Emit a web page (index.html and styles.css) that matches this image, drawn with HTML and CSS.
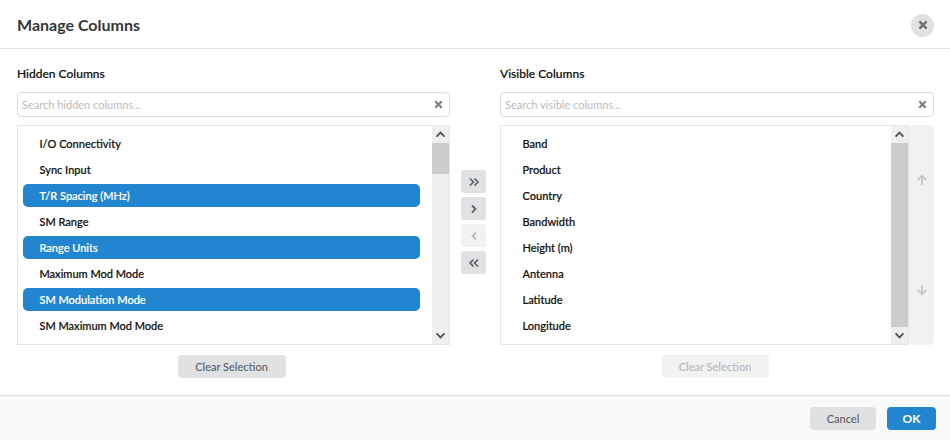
FILE: index.html
```html
<!DOCTYPE html>
<html lang="en">
<head>
    <meta charset="UTF-8">
    <meta name="viewport" content="width=device-width, initial-scale=1.0">
    <title>Manage Columns</title>
    <link rel="stylesheet" href="styles.css">
</head>
<body>
  <svg class="defs" width="0" height="0">
    <symbol id="i-x" viewBox="0 0 10 10"><path d="M2.3 .6 5 3.2 7.7 .6 9.4 2.3 6.8 5l2.6 2.7-1.7 1.7L5 6.800 2.300 9.400 .6 7.700 3.200 5 .6 2.300z"/></symbol>
    <symbol id="i-up" viewBox="0 0 12 8"><path d="M1.500 6.300 6 1.800l4.500 4.500" fill="none" stroke="currentColor" stroke-width="2"/></symbol>
    <symbol id="i-down" viewBox="0 0 12 8"><path d="M1.500 1.700 6 6.200l4.500-4.500" fill="none" stroke="currentColor" stroke-width="2"/></symbol>
    <symbol id="i-right" viewBox="0 0 10 10"><path d="M3 1.500 6.500 5 3 8.500" fill="none" stroke="currentColor" stroke-width="1.800"/></symbol>
    <symbol id="i-left" viewBox="0 0 10 10"><path d="M7 1.500 3.500 5 7 8.500" fill="none" stroke="currentColor" stroke-width="1.800"/></symbol>
    <symbol id="i-rr" viewBox="0 0 10 10"><path d="M1 1.500 4.500 5 1 8.500M5.500 1.500 9 5 5.500 8.500" fill="none" stroke="currentColor" stroke-width="1.700"/></symbol>
    <symbol id="i-ll" viewBox="0 0 10 10"><path d="M4.500 1.500 1 5l3.500 3.500M9 1.500 5.500 5 9 8.500" fill="none" stroke="currentColor" stroke-width="1.700"/></symbol>
    <symbol id="i-arrow-up" viewBox="0 0 12 12"><path d="M6 11V1.800M1.800 6 6 1.800 10.200 6" fill="none" stroke="currentColor" stroke-width="1.800"/></symbol>
    <symbol id="i-arrow-down" viewBox="0 0 12 12"><path d="M6 1v9.200M1.800 6 6 10.200 10.200 6" fill="none" stroke="currentColor" stroke-width="1.800"/></symbol>
  </svg>

  <div class="dialog">
    <div class="dialog-head">
      <h1>Manage Columns</h1>
      <button class="close-btn"><svg class="icon-x"><use href="#i-x"/></svg></button>
    </div>

    <div class="dialog-body">
      <!-- Hidden -->
      <div class="col">
        <h2>Hidden Columns</h2>
        <div class="search">
          <input placeholder="Search hidden columns...">
          <svg class="icon-x"><use href="#i-x"/></svg>
        </div>
        <div class="list-row">
          <div class="list">
            <ul class="items">
              <li>I/O Connectivity</li>
              <li>Sync Input</li>
              <li class="selected">T/R Spacing (MHz)</li>
              <li>SM Range</li>
              <li class="selected">Range Units</li>
              <li>Maximum Mod Mode</li>
              <li class="selected">SM Modulation Mode</li>
              <li>SM Maximum Mod Mode</li>
            </ul>
            <div class="scrollbar">
              <div class="scroll-btn"><svg class="icon-chev"><use href="#i-up"/></svg></div>
              <div class="track"><div class="thumb thumb-short"></div></div>
              <div class="scroll-btn"><svg class="icon-chev"><use href="#i-down"/></svg></div>
            </div>
          </div>
        </div>
        <div class="col-foot"><button class="btn btn-grey">Clear Selection</button></div>
      </div>

      <!-- Move buttons -->
      <div class="move">
        <button class="move-btn"><svg class="icon-move"><use href="#i-rr"/></svg></button>
        <button class="move-btn"><svg class="icon-move"><use href="#i-right"/></svg></button>
        <button class="move-btn off"><svg class="icon-move"><use href="#i-left"/></svg></button>
        <button class="move-btn"><svg class="icon-move"><use href="#i-ll"/></svg></button>
      </div>

      <!-- Visible -->
      <div class="col">
        <h2>Visible Columns</h2>
        <div class="search">
          <input placeholder="Search visible columns...">
          <svg class="icon-x"><use href="#i-x"/></svg>
        </div>
        <div class="list-row">
          <div class="list">
            <ul class="items">
              <li>Band</li>
              <li>Product</li>
              <li>Country</li>
              <li>Bandwidth</li>
              <li>Height (m)</li>
              <li>Antenna</li>
              <li>Latitude</li>
              <li>Longitude</li>
            </ul>
            <div class="scrollbar">
              <div class="scroll-btn"><svg class="icon-chev"><use href="#i-up"/></svg></div>
              <div class="track"><div class="thumb"></div></div>
              <div class="scroll-btn"><svg class="icon-chev"><use href="#i-down"/></svg></div>
            </div>
          </div>
          <div class="order">
            <svg class="icon-arrow"><use href="#i-arrow-up"/></svg>
            <svg class="icon-arrow"><use href="#i-arrow-down"/></svg>
          </div>
        </div>
        <div class="col-foot"><button class="btn btn-grey off">Clear Selection</button></div>
      </div>
    </div>

    <div class="dialog-foot">
      <button class="btn btn-grey btn-cancel">Cancel</button>
      <button class="btn btn-blue">OK</button>
    </div>
  </div>
</body>
</html>
```

FILE: styles.css
```css
* {
    box-sizing: border-box;
    margin: 0;
    padding: 0;
}

body {
    font-family: Lato, "Open Sans", sans-serif;
    background-color: #fff;
    color: #222;
    width: 950px;
    height: 440px;
    overflow: hidden;
}

button {
    font-family: inherit;
    border: none;
    cursor: pointer;
}

ul {
    list-style: none;
}

.defs {
    position: absolute;
}

.dialog {
    display: flex;
    flex-direction: column;
    height: 440px;
}

.dialog-head {
    display: flex;
    align-items: center;
    justify-content: space-between;
    height: 49px;
    padding: 2px 16px 0 17px;
    border-bottom: 1px solid #dee0e2;
}

h1 {
    font-size: 16px;
    font-weight: 700;
    color: #33373b;
    padding-bottom: 2px;
}

.close-btn {
    display: flex;
    align-items: center;
    justify-content: center;
    width: 23px;
    height: 23px;
    border-radius: 50%;
    background-color: #dfe1e3;
}

.icon-x {
    width: 10px;
    height: 10px;
    fill: #6f7173;
}

.dialog-body {
    flex: 1;
    display: flex;
    padding: 17px 16px 0 17px;
}

.col {
    width: 433px;
    display: flex;
    flex-direction: column;
}

.col:last-child {
    width: 434px;
}

h2 {
    font-size: 12px;
    font-weight: 500;
    line-height: 15px;
    color: #111;
    margin-bottom: 11px;
    -webkit-text-stroke: 0.2px #111;
}

.search {
    display: flex;
    align-items: center;
    height: 25px;
    padding: 0 5px 0 4px;
    border: 1px solid #dcdcdc;
    border-radius: 4px;
    margin-bottom: 8px;
}

.search input {
    flex: 1;
    border: none;
    outline: none;
    font-family: inherit;
    font-size: 11px;
    color: #333;
}

.search input::placeholder {
    color: #b9bbbd;
    opacity: 1;
}

.search .icon-x {
    width: 9px;
    height: 9px;
    margin-right: 1px;
    fill: #808285;
}

.list-row {
    display: flex;
    height: 220px;
}

.list {
    flex: 1;
    display: flex;
    border: 1px solid #e6e6e6;
    overflow: hidden;
}

.items {
    flex: 1;
    padding: 6px 12px 0 5px;
    overflow: hidden;
}

.items li {
    height: 23px;
    line-height: 23px;
    margin-bottom: 3px;
    padding-left: 16.5px;
    font-size: 11px;
    font-weight: 500;
    color: #111;
    -webkit-text-stroke: 0.2px #111;
    border-radius: 5px;
    box-shadow: 0 0 0 1px #fdfdfd inset;
}

.items li.selected {
    background-color: #2185d0;
    color: #fff;
    -webkit-text-stroke: 0.2px #fff;
    box-shadow: none;
}

.scrollbar {
    display: flex;
    flex-direction: column;
    width: 17px;
    background-color: #efefef;
}

.scroll-btn {
    display: flex;
    align-items: center;
    justify-content: center;
    height: 17px;
    color: #505050;
}

.icon-chev {
    width: 11px;
    height: 7px;
}

.track {
    flex: 1;
}

.thumb {
    height: 100%;
    background-color: #cdcdcd;
}

.thumb-short {
    height: 31px;
}

.order {
    display: flex;
    flex-direction: column;
    align-items: center;
    justify-content: center;
    gap: 98px;
    width: 25px;
    background-color: #f0f1f1;
    border-radius: 5px;
    color: #c4c6c7;
}

.icon-arrow {
    width: 12px;
    height: 12px;
}

.move {
    width: 50px;
    padding-top: 104px;
    padding-left: 11px;
    display: flex;
    flex-direction: column;
    gap: 4px;
}

.move-btn {
    display: flex;
    align-items: center;
    justify-content: center;
    width: 25px;
    height: 23px;
    border-radius: 3px;
    background-color: #dfe1e3;
    color: #5f6366;
}

.move-btn.off {
    background-color: #f1f2f2;
    color: #b9bcbe;
}

.icon-move {
    width: 10px;
    height: 10px;
}

.col-foot {
    display: flex;
    justify-content: center;
    padding: 10px 4px 0 0;
}

.btn {
    height: 23px;
    border-radius: 4px;
    font-size: 11px;
    font-weight: 500;
}

.btn-grey {
    width: 108px;
    background-color: #dfe1e3;
    color: #5d6063;
}

.btn-grey.off {
    width: 107px;
    background-color: #f1f2f2;
    color: #b3b6b8;
}

.btn-blue {
    width: 49px;
    background-color: #2185d0;
    color: #fff;
    font-size: 12px;
    font-weight: 700;
}

.dialog-foot {
    display: flex;
    justify-content: flex-end;
    gap: 11px;
    height: 45px;
    padding: 11px 14px 0 0;
    background-color: #f8f9fb;
    border-top: 1px solid #dcdee0;
}

.btn-cancel {
    width: 66px;
}
```
